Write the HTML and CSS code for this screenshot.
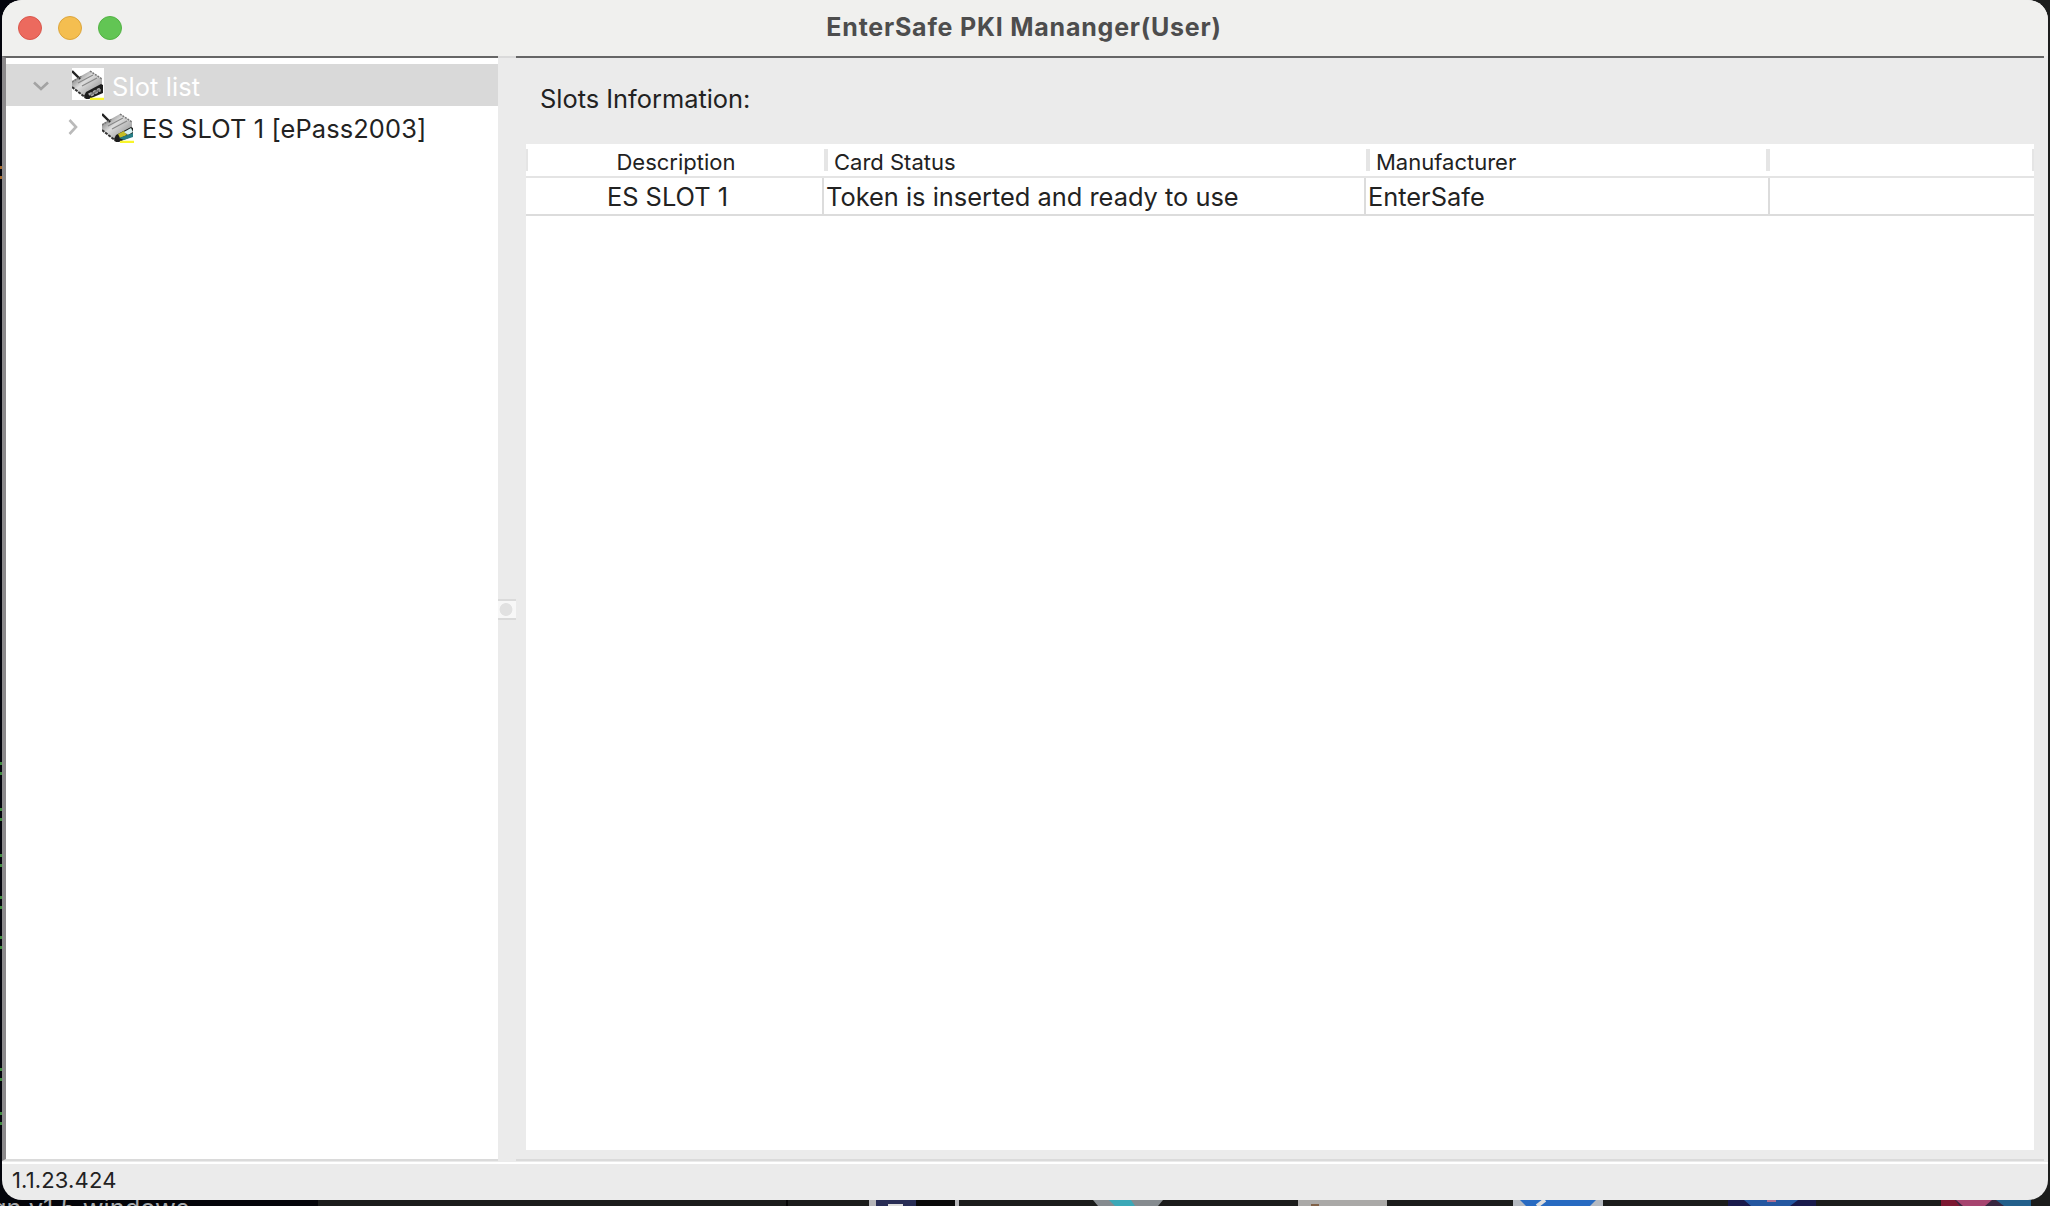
FILE: index.html
```html
<!DOCTYPE html>
<html lang="en">
<head>
<meta charset="utf-8">
<title>EnterSafe PKI Mananger(User)</title>
<link rel="stylesheet" href="styles.css">
</head>
<body>
<svg class="defs" width="0" height="0">
  <defs>
    <linearGradient id="metal" x1="0" y1="0" x2="1" y2="1">
      <stop offset="0.1" stop-color="#777"/><stop offset="0.4" stop-color="#ddd"/><stop offset="0.65" stop-color="#b4b4b4"/><stop offset="1" stop-color="#777"/>
    </linearGradient>
    <g id="reader">
      <path d="M0 13 18 3 30 11V24L15 31 0 19Z" fill="url(#metal)"/>
      <path d="M0 3 8 11" stroke="#222" stroke-width="2.4"/>
      <path d="M0 14 10 8M18 3 30 11" stroke="#777" stroke-width="1.5" stroke-dasharray="2 1"/>
      <path d="M6 15 21 7M10 18 25 10" stroke="#888" stroke-width="1.1"/>
      <path d="M0 19 14 30" stroke="#333" stroke-width="2" stroke-dasharray="3 1"/>
      <path d="M14 24 29 16 31 17V25L17 31H14L12 28Z" fill="#1c1c1c"/>
      <path d="M18 30.8H32" stroke="#f8f52b" stroke-width="2.2"/>
    </g>
  </defs>
</svg>
<div class="desktop">
  <div class="terminal">
    <i class="orange" style="top:166px"></i><i style="top:762px"></i><i style="top:808px"></i><i style="top:854px"></i><i style="top:896px"></i><i style="top:936px"></i><i style="top:1068px"></i><i style="top:1112px"></i>
  </div>
  <div class="dock">
    <span class="dock-text">gn v1.5 windows</span>
    <svg class="dock-apps" width="2050" height="6" viewBox="0 0 2050 6">
      <path d="M318 0H2050V6H318Z" fill="#1b1c1b"/><path d="M787 0V6" stroke="#050505" stroke-width="2"/>
      <path d="M869 0H959V6H869Z" fill="#b5b5b8"/><path d="M876 0H916V6H876Z" fill="#282d55"/><path d="M888 4H903V6H888Z" fill="#ddd"/><path d="M916 0H955V6H916Z" fill="#080808"/>
      <path d="M1093 0H1163L1158 6H1098Z" fill="#858b8f"/><path d="M1109 0H1131L1135 6H1115Z" fill="#3ba8b7"/>
      <path d="M1298 0H1387V6H1298Z" fill="#aaa9a7"/><path d="M1311 4H1319V6H1311Z" fill="#806248"/>
      <path d="M1513 0H1603V6H1513Z" fill="#b4b9c0"/><path d="M1520 0H1596L1590 6H1526Z" fill="#276ac1"/><path d="M1545 0 1537 6" stroke="#ddd" stroke-width="4"/>
      <path d="M1728 0H1816V6H1728Z" fill="#191a4c"/><path d="M1744 0H1798L1790 6H1751Z" fill="#2457a0"/><path d="M1767 0H1776V2H1767Z" fill="#a96d91"/>
      <path d="M1941 0H2031V6H1941Z" fill="#38263f"/><path d="M1941 0H1955L1960 6H1941Z" fill="#7c1831"/><path d="M1956 0H1992L1985 6H1963Z" fill="#a6446f"/><path d="M1996 0H2031V6H2004Z" fill="#225f8b"/>
    </svg>
  </div>

  <main class="window">
    <header class="titlebar">
      <div class="lights"><b class="red"></b><b class="amber"></b><b class="green"></b></div>
      <h1 class="title">EnterSafe PKI Mananger(User)</h1>
    </header>
    <div class="content">
      <nav class="tree">
        <div class="node selected">
          <svg class="arrow-open" width="18" height="10" viewBox="0 0 18 10"><path d="M2 1.5 9 8 16 1.5"/></svg>
          <svg class="device" width="32" height="32" viewBox="0 0 32 32"><path d="M0 0H32V32H0Z" fill="#fff"/><use href="#reader"/><path d="M17 26 28 20V23L19 28Z" fill="#777" stroke="#aaa" stroke-width="1.3" stroke-dasharray="3 1.5"/></svg>
          <span>Slot list</span>
        </div>
        <div class="node child">
          <svg class="arrow-closed" width="10" height="18" viewBox="0 0 10 18"><path d="M1.5 2 8 9 1.5 16"/></svg>
          <svg class="device" width="32" height="32" viewBox="0 0 32 32"><use href="#reader"/><path d="M16 23 22 20 25 24 18 27Z" fill="#c4bd24"/><path d="M22 21 29 17 31 21 26 24Z" fill="#d9f2f2"/><path d="M17 27 31 22V26L22 29Z" fill="#267d85"/></svg>
          <span>ES SLOT 1 [ePass2003]</span>
        </div>
      </nav>
      <div class="splitter"><div class="grip"></div></div>
      <section class="details">
        <h2 class="heading"><span>Slots Information:</span></h2>
        <div class="table">
          <div class="row head">
            <div class="cell"><span>Description</span></div>
            <div class="cell"><span>Card Status</span></div>
            <div class="cell"><span>Manufacturer</span></div>
            <div class="cell"></div>
          </div>
          <div class="row data">
            <div class="cell"><span>ES SLOT 1</span></div>
            <div class="cell"><span>Token is inserted and ready to use</span></div>
            <div class="cell"><span>EnterSafe</span></div>
            <div class="cell"></div>
          </div>
        </div>
      </section>
    </div>
    <footer class="status"><span>1.1.23.424</span></footer>
  </main>
</div>
</body>
</html>
```

FILE: styles.css
```css
* { box-sizing: border-box; }
body { margin: 0; overflow: hidden; font-family: Inter, "Liberation Sans", sans-serif; color: #222; }
h1, h2 { margin: 0; }
span { white-space: nowrap; }
.defs { position: absolute; }
.desktop { position: relative; width: 2050px; height: 1206px; padding: 0 2px 6px; overflow: hidden; background: linear-gradient(90deg, #03040c 50%, #1c1d1c 50%); }

/* Slivers of the desktop that show round the window */
.terminal i { position: absolute; left: 0; width: 2px; height: 13px; border: solid #3f8b3f; border-width: 3px 0; }
.terminal .orange { border-color: #a3682c; }
.dock { position: absolute; left: 0; top: 1200px; width: 2050px; height: 6px; overflow: hidden; background: #030409; }
.dock-text { position: absolute; left: -9px; top: -7px; font-size: 25.4px; line-height: 30px; color: #a5a8ac; }
.dock-apps { position: absolute; left: 0; top: 0; }

.window { position: relative; display: flex; flex-direction: column; width: 2046px; height: 1200px; overflow: hidden; border-radius: 20px; background: #ebebeb; }
.titlebar { display: grid; grid-template-columns: 120px 1fr 120px; align-items: center; height: 56px; background: #f0f0ee; }
.lights { display: flex; gap: 16px; padding-left: 16px; }
.lights b { width: 24px; height: 24px; border-radius: 50%; border: 1px solid #d9574c; background: #ec6a5e; }
.lights .amber { border-color: #dca53c; background: #f4be50; }
.lights .green { border-color: #53b244; background: #62c554; }
.title { padding: 0 2px 1px 0; text-align: center; font-size: 25px; line-height: 30px; font-weight: 700; color: #4d4d4d; letter-spacing: 0.78px; }

.content { display: flex; height: 1106px; }
.tree { width: 496px; padding-top: 6px; border: solid #666; border-width: 2px 0 2px 4px; border-left-color: #8b898b; border-bottom-color: #dadada; background: #fff; }
.node { display: flex; align-items: center; height: 42px; letter-spacing: 0.12px; }
.node span { padding-top: 5px; }
.arrow-open, .arrow-closed { fill: none; stroke: #a3a3a3; stroke-width: 2.6; }
.arrow-open { margin-top: 2px; }
.arrow-closed { stroke: #bababa; }
.selected { padding-left: 26px; background: #d9d9d9; color: #fff; }
.selected .device { margin: -2px 8px 0 22px; }
.child { padding-left: 62px; }
.child .device { margin: 0 8px 0 24px; }
.node, .heading, .data { font-size: 25.4px; line-height: 30px; font-weight: 420; }
.splitter { display: flex; align-items: center; width: 18px; border-top: 2px solid #dadada; }
.grip { width: 18px; height: 21px; border: solid #dadada; border-width: 2px 0; background: radial-gradient(circle at 8px 50%, #e1e1e1 6px, #f7f7f7 6.8px); }
.details { display: flex; flex-direction: column; width: 1528px; border-top: 2px solid #666; border-bottom: 2px solid #dadada; padding: 0 10px; }
.heading { height: 86px; padding: 26px 0 0 14px; }
.table { width: 1508px; height: 1006px; background: #fff; }
.row { display: grid; align-items: center; }
.head { grid-template-columns: 298px 542px 400px 268px; height: 34px; font-size: 22px; line-height: 26px; font-weight: 420; border-bottom: 2px solid #e4e4e4; }
.head .cell { height: 22px; display: flex; align-items: center; border-left: 4px solid #e5e5e5; padding: 5px 0 0 6px; }
.head .cell:first-child { justify-content: center; border-left-width: 2px; padding-left: 0; }
.head .cell:last-child { border-right: 2px solid #e5e5e5; }
.data { grid-template-columns: 296px 542px 404px 266px; height: 38px; border-bottom: 2px solid #dcdcdc; }
.data .cell { display: flex; align-items: center; height: 36px; border-left: 2px solid #dcdcdc; padding: 2px 0 0 2px; }
.data .cell:first-child { justify-content: center; border-left: 0; padding: 2px 13px 0 0; }
.status { height: 38px; padding: 3px 0 0 10px; border-top: 2px solid #fff; margin-top: 1px; font-size: 22px; line-height: 26px; font-weight: 420; letter-spacing: 0.15px; }
```
